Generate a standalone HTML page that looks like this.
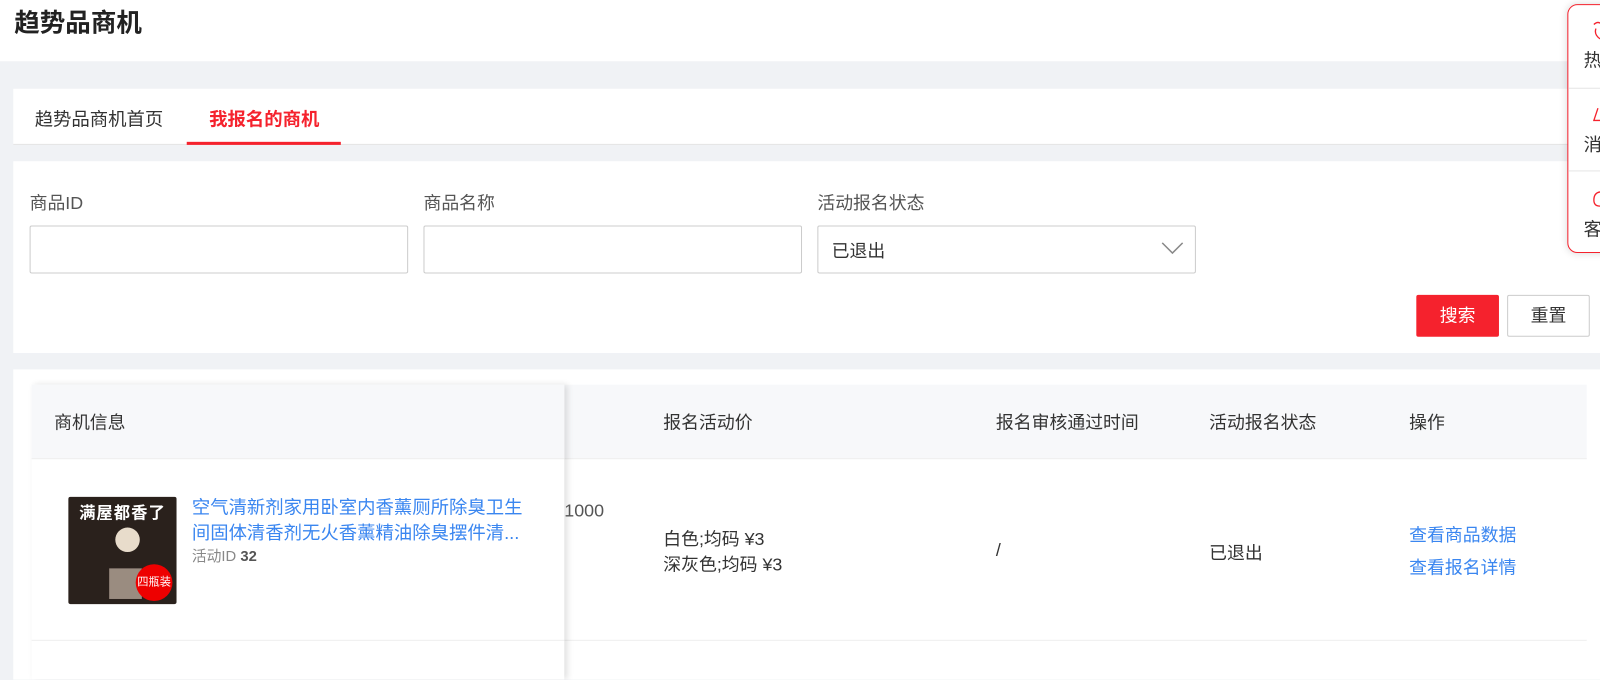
<!DOCTYPE html><html><head><meta charset="utf-8"><style>
*{box-sizing:border-box;margin:0;padding:0}
body{width:1600px;height:666px;overflow:hidden;background:#f0f2f5;font-family:"Liberation Sans","Noto Sans CJK SC",sans-serif;color:#333;position:relative}
#w{position:absolute;left:0;top:0;width:1568px;height:653px;transform:scale(1.0204);transform-origin:0 0}
.abs{position:absolute}
.hdr{left:0;top:0;width:1568px;height:60px;background:#fff}
.card{background:#fff;left:13px;width:1555px}
.lbl{font-size:17.5px;color:#555}
.inp{height:47px;width:371px;border:1px solid #ccc;border-radius:2px;background:#fff;top:221px}
.th{font-size:17.5px;color:#333;top:401px}
.td{font-size:17.5px;color:#333}
</style></head><body><div id="w">
<div class="abs hdr"></div>
<div class="abs" style="left:14px;top:3px;font-size:25px;font-weight:bold;color:#222">趋势品商机</div>
<div class="abs card" style="top:87px;height:55px;border-bottom:1px solid #e3e3e3"></div>
<div class="abs" style="left:34px;top:103px;font-size:18px;color:#333">趋势品商机首页</div>
<div class="abs" style="left:205px;top:103px;font-size:18px;color:#f5222d;font-weight:bold">我报名的商机</div>
<div class="abs" style="left:183px;top:139px;width:151px;height:3px;background:#f5222d"></div>
<div class="abs card" style="top:158px;height:188px"></div>
<div class="abs lbl" style="left:29px;top:186px">商品ID</div>
<div class="abs lbl" style="left:415px;top:186px">商品名称</div>
<div class="abs lbl" style="left:801px;top:186px">活动报名状态</div>
<div class="abs inp" style="left:29px"></div>
<div class="abs inp" style="left:415px"></div>
<div class="abs inp" style="left:801px"></div>
<div class="abs" style="left:815px;top:233px;font-size:17.5px">已退出</div>
<svg class="abs" style="left:1138px;top:236px" width="22" height="14"><path d="M1 2 L11 12 L21 2" stroke="#888" stroke-width="1.5" fill="none"/></svg>
<div class="abs" style="left:1388px;top:289px;width:81px;height:41px;background:#f5222d;border-radius:2px;color:#fff;font-size:17.5px;text-align:center;line-height:41px">搜索</div>
<div class="abs" style="left:1477px;top:289px;width:81px;height:41px;border:1px solid #ccc;border-radius:2px;background:#fff;font-size:17.5px;text-align:center;line-height:39px">重置</div>
<div class="abs card" style="top:362px;height:304px"></div>
<div class="abs" style="left:31px;top:377px;width:1524px;height:73px;background:#f7f8fa;border-bottom:1px solid #eee"></div>
<div class="abs" style="left:31px;top:627px;width:1524px;height:1px;background:#eee"></div>
<div class="abs" style="left:31px;top:377px;width:522px;height:289px;background:#fff;box-shadow:3px 0 6px rgba(0,0,0,.12)"></div>
<div class="abs" style="left:31px;top:377px;width:522px;height:73px;background:#f7f8fa;border-bottom:1px solid #eee"></div>
<div class="abs" style="left:31px;top:627px;width:522px;height:1px;background:#eee"></div>
<div class="abs th" style="left:53px">商机信息</div>
<div class="abs th" style="left:650px">报名活动价</div>
<div class="abs th" style="left:976px">报名审核通过时间</div>
<div class="abs th" style="left:1185px">活动报名状态</div>
<div class="abs th" style="left:1381px">操作</div>
<div class="abs" style="left:67px;top:487px;width:106px;height:105px;background:#2a211c;border-radius:2px;overflow:hidden">
<div style="color:#fff;font-size:16px;font-weight:bold;text-align:center;margin-top:2px;letter-spacing:1px">满屋都香了</div>
<div style="position:absolute;left:46px;top:30px;width:24px;height:24px;border-radius:50%;background:#e8dccb"></div>
<div style="position:absolute;left:40px;top:70px;width:32px;height:30px;background:#9a8c80"></div>
<div style="position:absolute;left:66px;top:66px;width:36px;height:36px;border-radius:50%;background:#e00;color:#fff;font-size:11px;line-height:36px;text-align:center">四瓶装</div>
</div>
<div class="abs" style="left:188px;top:485px;font-size:18px;color:#3a86f0;line-height:25px;width:340px">空气清新剂家用卧室内香薰厕所除臭卫生间固体清香剂无火香薰精油除臭摆件清...</div>
<div class="abs" style="left:188px;top:534px;font-size:14.5px;color:#888">活动ID <b style="color:#555">32</b></div>
<div class="abs td" style="left:553px;top:490px;color:#555">1000</div>
<div class="abs td" style="left:650px;top:516px;line-height:25px">白色;均码 ¥3<br>深灰色;均码 ¥3</div>
<div class="abs td" style="left:976px;top:529px">/</div>
<div class="abs td" style="left:1185px;top:529px">已退出</div>
<div class="abs td" style="left:1381px;top:508px;color:#3a86f0;line-height:32px">查看商品数据<br>查看报名详情</div>
<div class="abs" style="left:1536px;top:4px;width:80px;height:244px;background:#fff;border:1px solid #f5222d;border-radius:10px;box-shadow:0 0 8px rgba(0,0,0,.15)"></div>
<div class="abs" style="left:1537px;top:86px;width:63px;height:1px;background:#e5e5e5"></div>
<div class="abs" style="left:1537px;top:167px;width:63px;height:1px;background:#e5e5e5"></div>
<svg class="abs" style="left:1560px;top:20px" width="10" height="20"><path d="M2 4 Q6 0 10 4 M4 8 Q2 14 8 18" stroke="#f5222d" stroke-width="1.3" fill="none"/></svg>
<svg class="abs" style="left:1560px;top:104px" width="10" height="18"><path d="M6 2 L2 14 L10 14" stroke="#f5222d" stroke-width="1.3" fill="none"/></svg>
<svg class="abs" style="left:1560px;top:186px" width="10" height="20"><path d="M10 2 Q2 2 2 10 Q2 16 8 16" stroke="#f5222d" stroke-width="1.3" fill="none"/></svg>
<div class="abs" style="left:1552px;top:45px;font-size:18px">热</div>
<div class="abs" style="left:1552px;top:128px;font-size:18px">消</div>
<div class="abs" style="left:1552px;top:211px;font-size:18px">客</div>
</div></body></html>
